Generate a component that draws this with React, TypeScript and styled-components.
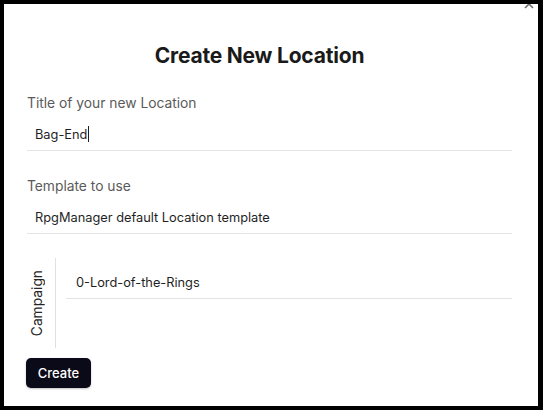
import React from "react";
import styled, { createGlobalStyle } from "styled-components";

const Global = createGlobalStyle`
  html, body { margin: 0; padding: 0; background: #000; }
  body { font-family: Inter, "Noto Sans", "Liberation Sans", sans-serif; }
  * { box-sizing: border-box; }
`;

const Modal = styled.div`
  position: relative;
  margin: 4px 0 0 4px;
  width: 534px;
  height: 402px;
  background: #fff;
  overflow: hidden;
  padding: 38px 26px 0 23px;
  display: flex;
  flex-direction: column;
`;

const Close = styled.svg`
  position: absolute;
  top: -4px;
  right: 5px;
  width: 8px;
  height: 8px;
`;

const Title = styled.h1`
  margin: 0 0 24px 0;
  padding-right: 20px;
  text-align: center;
  font-size: 21px;
  line-height: 27px;
  font-weight: 700;
  color: #1a1a1a;
  letter-spacing: -0.2px;
`;

const Label = styled.div`
  font-size: 13.8px;
  line-height: 20px;
  color: #5a5a5a;
  margin-bottom: 5px;
`;

const Field = styled.div<{ $gap?: number; $indent?: number }>`
  height: 33px;
  border-bottom: 1px solid #e3e3e3;
  display: flex;
  align-items: center;
  padding: 0 0 0 ${(p) => p.$indent ?? 8}px;
  font-size: 12.8px;
  color: #1f1f1f;
  margin-bottom: ${(p) => p.$gap ?? 0}px;
`;

const Caret = styled.span`
  display: inline-block;
  width: 1px;
  height: 16px;
  background: #1f1f1f;
  margin-left: 1px;
`;

const Row = styled.div`
  display: flex;
  height: 90px;
  margin-bottom: 10px;
`;

const SideLabel = styled.div`
  width: 29px;
  padding-right: 8px;
  border-right: 1px solid #e0e0e0;
  display: flex;
  align-items: center;
  justify-content: center;
`;

const Vertical = styled.span`
  writing-mode: vertical-rl;
  transform: rotate(180deg);
  font-size: 13.8px;
  line-height: 20px;
  color: #262626;
`;

const SideBody = styled.div`
  flex: 1;
  padding: 8px 0 0 10px;
`;

const Button = styled.button`
  align-self: flex-start;
  margin-left: -1px;
  width: 65px;
  height: 30px;
  border: none;
  border-radius: 5px;
  background: #0b0a18;
  color: #fff;
  font-family: inherit;
  font-size: 13px;
  font-weight: 500;
  box-shadow: 0 1px 2px rgba(0, 0, 0, 0.25);
`;

export default function App() {
  return (
    <>
      <Global />
      <Modal>
        <Close viewBox="0 0 8 8" overflow="visible">
          <path d="M0 0 L8 8 M8 0 L0 8" stroke="#6e6e6e" strokeWidth="1.6" fill="none" />
        </Close>
        <Title>Create New Location</Title>
        <Label>Title of your new Location</Label>
        <Field $gap={25}>
          Bag-End<Caret />
        </Field>
        <Label>Template to use</Label>
        <Field $gap={24}>RpgManager default Location template</Field>
        <Row>
          <SideLabel>
            <Vertical>Campaign</Vertical>
          </SideLabel>
          <SideBody>
            <Field $indent={10}>0-Lord-of-the-Rings</Field>
          </SideBody>
        </Row>
        <Button>Create</Button>
      </Modal>
    </>
  );
}
